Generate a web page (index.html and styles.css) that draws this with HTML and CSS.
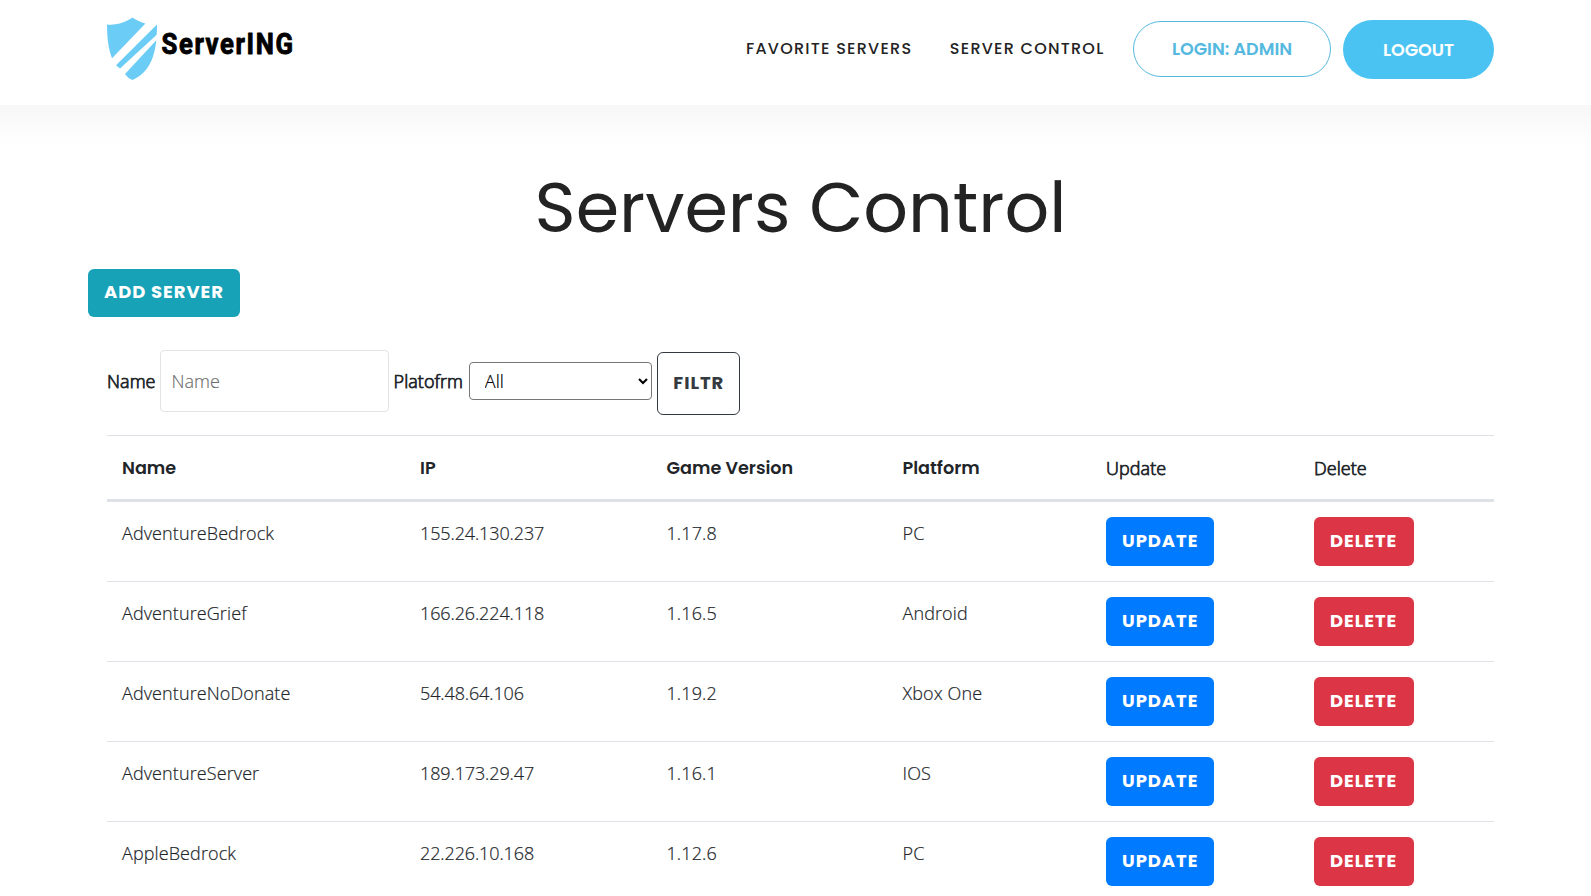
FILE: index.html
```
<!DOCTYPE html>
<html lang="en">
<head>
<meta charset="utf-8">
<title>Servers Control</title>
<link rel="stylesheet" href="styles.css">
</head>
<body>
<header class="header">
  <a class="logo" href="#">
    <svg class="logo-art" width="200" height="66" viewBox="0 0 200 66" role="img" aria-label="ServerING">
      <defs>
        <clipPath id="shield"><path d="M0 7.5C10 8.500 19 5 25.500 0.500C32 5 41 8.500 50 7.500C50 35 45 54 25.500 63C6 54 0 35 0 7.500Z"/></clipPath>
      </defs>
      <g clip-path="url(#shield)" fill="#6bcdf5">
        <path d="M0 0H45L38.700 6.300L5.300 41L0 41Z"/>
        <path d="M50 7.500V17.500L13 51.500L9 48.300Z"/>
        <path d="M50 22.500V64H24L18 57Z"/>
      </g>
      <text class="logo-text" x="54.500" y="37" textLength="133" lengthAdjust="spacingAndGlyphs">ServerING</text>
    </svg>
  </a>
  <nav class="nav">
    <a class="nav-link" href="#">Favorite Servers</a>
    <a class="nav-link" href="#">Server Control</a>
    <a class="pill pill-outline" href="#">Login: Admin</a>
    <a class="pill pill-solid" href="#">Logout</a>
  </nav>
</header>
<main class="container">
  <h1 class="title">Servers Control</h1>
  <a class="btn btn-info" href="#">Add server</a>
  <form class="filter">
    <label class="label" for="name">Name</label>
    <input class="input" id="name" type="text" placeholder="Name">
    <label class="label" for="platform">Platofrm</label>
    <select class="select" id="platform"><option>All</option></select>
    <button class="btn btn-outline" type="button">Filtr</button>
  </form>
  <table class="table">
    <colgroup><col class="c-name"><col class="c-ip"><col class="c-version"><col class="c-platform"><col class="c-update"><col></colgroup>
    <thead>
      <tr><th>Name</th><th>IP</th><th>Game Version</th><th>Platform</th><td class="label">Update</td><td class="label">Delete</td></tr>
    </thead>
    <tbody>
      <tr><td>AdventureBedrock</td><td class="ip">155.24.130.237</td><td>1.17.8</td><td>PC</td><td class="action"><a class="btn btn-primary" href="#">Update</a></td><td class="action"><a class="btn btn-danger" href="#">Delete</a></td></tr>
      <tr><td>AdventureGrief</td><td class="ip">166.26.224.118</td><td>1.16.5</td><td>Android</td><td class="action"><a class="btn btn-primary" href="#">Update</a></td><td class="action"><a class="btn btn-danger" href="#">Delete</a></td></tr>
      <tr><td>AdventureNoDonate</td><td class="ip">54.48.64.106</td><td>1.19.2</td><td>Xbox One</td><td class="action"><a class="btn btn-primary" href="#">Update</a></td><td class="action"><a class="btn btn-danger" href="#">Delete</a></td></tr>
      <tr><td>AdventureServer</td><td class="ip">189.173.29.47</td><td>1.16.1</td><td>IOS</td><td class="action"><a class="btn btn-primary" href="#">Update</a></td><td class="action"><a class="btn btn-danger" href="#">Delete</a></td></tr>
      <tr><td>AppleBedrock</td><td class="ip">22.226.10.168</td><td>1.12.6</td><td>PC</td><td class="action"><a class="btn btn-primary" href="#">Update</a></td><td class="action"><a class="btn btn-danger" href="#">Delete</a></td></tr>
    </tbody>
  </table>
</main>
</body>
</html>
```
FILE: styles.css
```
* { box-sizing: border-box; }
html, body { height: 100%; }
body {
  margin: 0;
  overflow: hidden;
  background: #fff;
  color: #212529;
  font: 300 18px/27px "Open Sans", "Noto Sans", sans-serif;
}
a { color: inherit; text-decoration: none; }

.header {
  height: 105px;
  padding: 0 97px 0 107px;
  display: flex;
  justify-content: space-between;
  align-items: flex-start;
  box-shadow: 0 -10px 30px 30px rgba(0, 0, 0, .035);
}
.logo { padding-top: 17px; }
.logo-art { display: block; overflow: visible; }
.logo-text { font: 700 29px Roboto, sans-serif; letter-spacing: 1.8px; fill: #000; stroke: #000; stroke-width: .9px; stroke-linejoin: round; }
.nav {
  display: flex;
  align-items: center;
  height: 98px;
  font-family: Poppins, Inter, sans-serif;
  text-transform: uppercase;
}
.nav-link {
  margin-right: 37.5px;
  padding-bottom: 2px;
  color: #232323;
  font-size: 16px;
  font-weight: 500;
  letter-spacing: 1.25px;
}
.nav-link + .nav-link { margin-right: 28.5px; }
.pill {
  display: flex;
  align-items: center;
  justify-content: center;
  border-radius: 30px;
  font-size: 17.5px;
  font-weight: 600;
}
.pill-outline {
  width: 198px;
  height: 56px;
  margin-right: 12px;
  border: 1px solid #55b9df;
  color: #55b9df;
}
.pill-solid { width: 151px; height: 59px; margin-top: 1px; padding-top: 2px; background: #4bc3f2; color: #fff; }

.container { padding: 0 97px 0 107px; }
.title {
  margin: 0 0 17px;
  padding-top: 58px;
  color: #232323;
  font: 400 70px/89px Poppins, Inter, sans-serif;
  text-align: center;
}
.btn {
  display: inline-block;
  height: 49px;
  padding: 8px 15px;
  border: 1px solid transparent;
  border-radius: 6px;
  color: #fff;
  font: 700 18px/29px Poppins, Inter, sans-serif;
  letter-spacing: .95px;
  text-transform: uppercase;
  vertical-align: top;
}
.btn-info { height: 48px; margin-left: -19px; padding-top: 7px; background: #17a2b8; }
.btn-primary { background: #007bff; }
.btn-danger { padding-right: 16px; background: #dc3545; }
.btn-outline { height: 63px; margin: 3px 0 0 1px; padding: 7px 15px 8px; background: #fff; border-color: #343a40; color: #343a40; }

.filter {
  display: flex;
  align-items: center;
  gap: 4.500px;
  height: 65px;
  margin: 32px 0 21px;
}
.label { letter-spacing: .06px; -webkit-text-stroke: .75px #212529; }
.input {
  width: 229px;
  height: 62px;
  margin-bottom: 1px;
  padding: 0 10.5px;
  border: 1px solid #e1e3e5;
  border-radius: 4px;
  font: inherit;
}
.input::placeholder { color: #6c6c6c; -webkit-text-stroke: .15px #6c6c6c; }
.select {
  width: 183px;
  height: 38px;
  margin: 0 0 1px 1.300px;
  padding: 0 11px;
  border: 1px solid #767676;
  border-radius: 4px;
  background: #fff;
  color: #000;
  font: inherit;
  -webkit-text-stroke: .2px #000;
}

.table { width: 100%; table-layout: fixed; border-collapse: separate; border-spacing: 0; }
.table th, .table td { padding: 15px 15px 14px; border-top: 1px solid #dee2e6; text-align: left; vertical-align: top; }
.table thead th, .table thead td { height: 67px; padding-top: 19px; border-bottom: 3px solid #dee2e6; }
.table th { color: #212529; font: 600 17.6px/27px Poppins, Inter, sans-serif; }
.table tbody td { height: 80px; padding-top: 18px; letter-spacing: .1px; -webkit-text-stroke: .2px #212529; }
.table tbody tr:first-child td { height: 79px; border-top: 0; }
.table tbody .ip { letter-spacing: -.12px; }
.table tbody .action { padding-top: 15px; -webkit-text-stroke: 0; }
.c-name { width: 298px; }
.c-ip { width: 246.5px; }
.c-version { width: 236px; }
.c-platform { width: 203.5px; }
.c-update { width: 208px; }
```
